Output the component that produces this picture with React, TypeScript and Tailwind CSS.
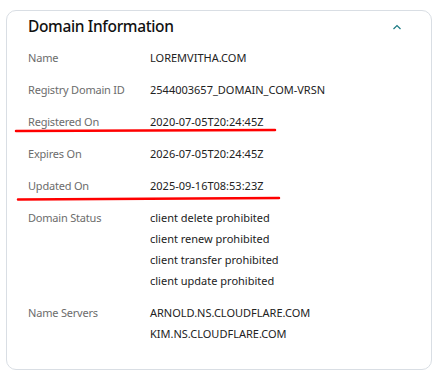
import React from 'react';

const rows: { label: string; values: string[] }[] = [
  { label: 'Name', values: ['LOREMVITHA.COM'] },
  { label: 'Registry Domain ID', values: ['2544003657_DOMAIN_COM-VRSN'] },
  { label: 'Registered On', values: ['2020-07-05T20:24:45Z'] },
  { label: 'Expires On', values: ['2026-07-05T20:24:45Z'] },
  { label: 'Updated On', values: ['2025-09-16T08:53:23Z'] },
];

const status = [
  'client delete prohibited',
  'client renew prohibited',
  'client transfer prohibited',
  'client update prohibited',
];

const servers = ['ARNOLD.NS.CLOUDFLARE.COM', 'KIM.NS.CLOUDFLARE.COM'];

export default function App() {
  return (
    <div className="relative w-[438px] h-[375px] bg-white pt-[10px] pl-[6px]" style={{ fontFamily: '"Noto Sans", sans-serif' }}>
      {/* Card */}
      <div className="w-[426px] h-[360px] rounded-[10px] border border-[#d9dee4] bg-white pl-[21px] pr-[28px]">
        <header className="flex justify-between items-center h-[31px]">
          <h2 className="text-[15.5px] font-medium text-[#111] tracking-[-0.35px]">Domain Information</h2>
          <svg width="10" height="6" viewBox="0 0 10 6" className="mr-[1px]">
            <path d="M1.5 5 L5 1.5 L8.5 5" fill="none" stroke="#1b7b84" strokeWidth="1.2" />
          </svg>
        </header>

        {rows.map(r => (
          <div key={r.label} className="flex h-[32px] items-center text-[11px]">
            <div className="w-[122px] text-[#6c6c6c] tracking-[-0.2px]">{r.label}</div>
            <div className="text-[#222]">{r.values[0]}</div>
          </div>
        ))}

        <div className="flex text-[11px] leading-[21px] pt-[5px]">
          <div className="w-[122px] text-[#6c6c6c] tracking-[-0.2px]">Domain Status</div>
          <div className="text-[#222]">
            {status.map(s => (
              <div key={s}>{s}</div>
            ))}
          </div>
        </div>

        <div className="flex text-[11px] leading-[21px] mt-[11px]">
          <div className="w-[122px] text-[#6c6c6c] tracking-[-0.2px]">Name Servers</div>
          <div className="text-[#222]">
            {servers.map(s => (
              <div key={s}>{s}</div>
            ))}
          </div>
        </div>
      </div>

      {/* Red annotation lines */}
      <svg className="absolute left-0 top-0 pointer-events-none" width="438" height="375">
        <line x1="16" y1="131" x2="275" y2="130" stroke="#f00" strokeWidth="2.5" strokeLinecap="round" />
        <line x1="18" y1="199.5" x2="279" y2="198" stroke="#f00" strokeWidth="2.5" strokeLinecap="round" />
      </svg>
    </div>
  );
}
